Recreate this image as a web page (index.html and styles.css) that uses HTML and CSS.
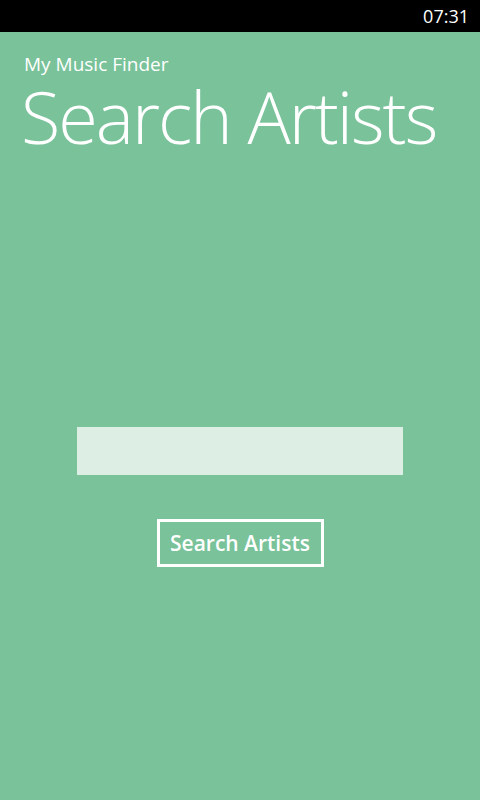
FILE: index.html
```html
<!DOCTYPE html>
<html>
<head>
<meta charset="utf-8">
<link rel="stylesheet" href="styles.css">
</head>
<body>
<div class="status"><span class="time">07:31</span></div>
<main class="page">
  <div class="app-title">My Music Finder</div>
  <h1 class="page-title">Search Artists</h1>
  <div class="form">
    <div class="textbox"></div>
    <button class="btn">Search Artists</button>
  </div>
</main>
</body>
</html>
```

FILE: styles.css
```css
html, body {
  margin: 0;
  padding: 0;
  height: 800px;
  background: #79c29a;
  font-family: "Open Sans", "Noto Sans", sans-serif;
  color: #fff;
  overflow: hidden;
}
.status {
  height: 32px;
  background: #000;
  display: flex;
  justify-content: flex-end;
  align-items: center;
  padding-right: 11px;
}
.time {
  font-size: 18px;
  font-weight: 400;
  color: #fff;
}
.page {
  padding: 0 24px;
}
.app-title {
  margin-top: 20px;
  font-size: 19px;
  line-height: 24px;
}
.page-title {
  margin: 0;
  margin-left: -3px;
  font-weight: 300;
  font-size: 72px;
  line-height: 80px;
  letter-spacing: -2px;
  white-space: nowrap;
}
.form {
  display: flex;
  flex-direction: column;
  align-items: center;
  margin-top: 271px;
}
.textbox {
  width: 326px;
  height: 48px;
  background: #ddeee4;
}
.btn {
  margin-top: 44px;
  border: 3px solid #fff;
  background: transparent;
  color: #fff;
  font-family: "Open Sans", sans-serif;
  font-weight: 600;
  font-size: 21px;
  height: 48px;
  width: 167px;
  padding: 0;
}
```
